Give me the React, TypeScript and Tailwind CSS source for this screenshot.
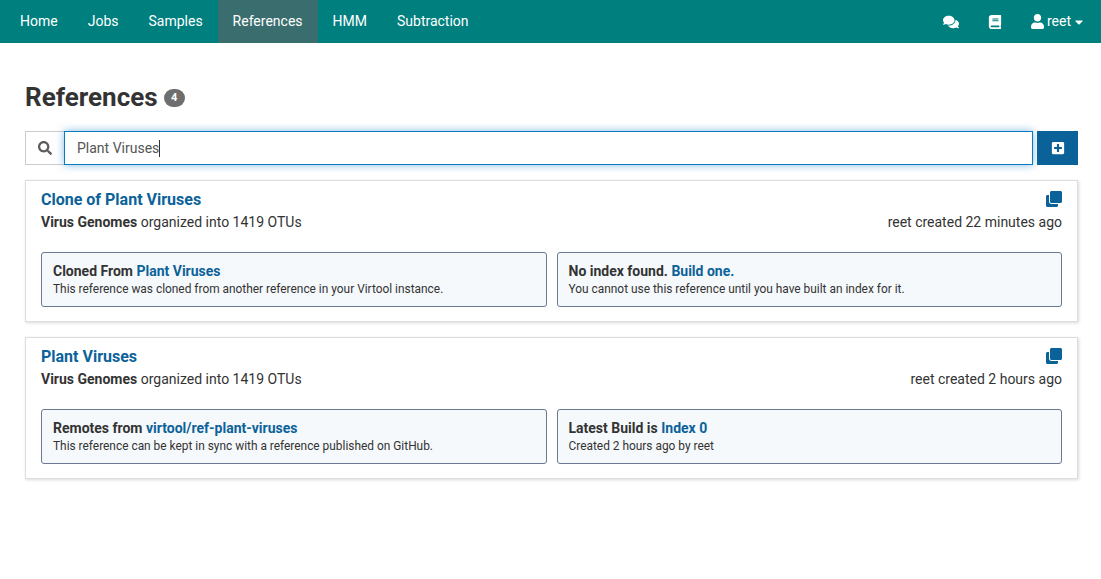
import React from "react";
import { FaBook, FaCaretDown, FaClone, FaComments, FaPlusSquare, FaSearch, FaUser } from "react-icons/fa";

const navItems = ["Home", "Jobs", "Samples", "References", "HMM", "Subtraction"];

function Badge({ title, children }: { title: React.ReactNode; children: React.ReactNode }) {
  return (
    <div className="h-[55px] rounded-[3px] border border-[#6b7891] bg-[#f6f9fc] px-[11px] pt-[8px]">
      <div className="text-[14px] font-bold leading-[20px] text-[#333]">{title}</div>
      <div className="text-[11.9px] leading-[16px] text-[#333]">{children}</div>
    </div>
  );
}

function RefCard({
  name,
  created,
  left,
  right,
}: {
  name: string;
  created: string;
  left: React.ReactNode;
  right: React.ReactNode;
}) {
  return (
    <div className="mb-[15px] h-[142px] border border-[#dddddd] bg-white px-[15px] pt-[9px] shadow-[1px_1px_3px_rgba(0,0,0,0.15)]">
      <div className="flex items-center justify-between">
        <a className="text-[16px] font-bold leading-[20px] text-[#0b6299]">{name}</a>
        <FaClone className="h-4 w-4 -translate-y-px text-[#0b6299]" />
      </div>
      <div className="mt-[2px] flex items-center justify-between text-[14px] leading-[20px] text-[#333]">
        <span>
          <span className="font-bold">Virus Genomes</span> organized into 1419 OTUs
        </span>
        <span>{created}</span>
      </div>
      <div className="mt-[20px] grid grid-cols-2 gap-[10px]">
        {left}
        {right}
      </div>
    </div>
  );
}

export default function App() {
  return (
    <div className="min-h-[579px] bg-white font-['Roboto',sans-serif] text-[#333]">
      <nav className="flex h-[43px] items-stretch justify-between bg-[#007f7f] pl-[5px] pr-[18px] text-[14px] text-white">
        <div className="flex">
          {navItems.map((item) => (
            <a
              key={item}
              className={"flex items-center px-[15px] " + (item === "References" ? "bg-[#3a6e6e]" : "")}
            >
              {item}
            </a>
          ))}
        </div>
        <div className="flex items-center">
          <FaComments className="h-4 w-4" />
          <FaBook className="ml-[29px] h-[14px] w-[14px]" />
          <span className="ml-[29px] flex items-center">
            <FaUser className="mr-[3px] h-[15px] w-[13px]" />
            reet
            <FaCaretDown className="ml-1 h-[14px] w-[8px]" />
          </span>
        </div>
      </nav>

      <main className="pl-[25px] pr-[23px]">
        <h1 className="mt-[38px] flex h-[32px] items-center text-[26px] font-bold leading-[32px] text-[#333]">
          References
          <span className="ml-[6px] mt-[2px] flex h-[18px] w-[21px] items-center justify-center rounded-full bg-[#6e6e6e] text-[11px] font-bold text-white">
            4
          </span>
        </h1>

        <div className="mt-[18px] flex h-[34px]">
          <div className="flex w-[39px] items-center justify-center border border-r-0 border-[#cccccc] text-[#5c5c5c]">
            <FaSearch className="h-[14px] w-[14px]" />
          </div>
          <div className="flex flex-1 items-center border border-[#0b7ac4] bg-white pl-[12px] text-[14px] text-[#555] shadow-[0_0_8px_rgba(11,122,196,0.5)]">
            Plant Viruses
            <span className="h-[17px] w-px bg-[#333]" />
          </div>
          <button className="ml-[4px] flex w-[41px] items-center justify-center bg-[#0b6299] text-white">
            <FaPlusSquare className="h-[14px] w-[14px]" />
          </button>
        </div>

        <div className="mt-[15px]">
          <RefCard
            name="Clone of Plant Viruses"
            created="reet created 22 minutes ago"
            left={
              <Badge
                title={
                  <>
                    Cloned From <a className="text-[#0b6299]">Plant Viruses</a>
                  </>
                }
              >
                This reference was cloned from another reference in your Virtool instance.
              </Badge>
            }
            right={
              <Badge
                title={
                  <>
                    No index found. <a className="text-[#0b6299]">Build one.</a>
                  </>
                }
              >
                You cannot use this reference until you have built an index for it.
              </Badge>
            }
          />
          <RefCard
            name="Plant Viruses"
            created="reet created 2 hours ago"
            left={
              <Badge
                title={
                  <>
                    Remotes from <a className="text-[#0b6299]">virtool/ref-plant-viruses</a>
                  </>
                }
              >
                This reference can be kept in sync with a reference published on GitHub.
              </Badge>
            }
            right={
              <Badge
                title={
                  <>
                    Latest Build is <a className="text-[#0b6299]">Index 0</a>
                  </>
                }
              >
                Created 2 hours ago by reet
              </Badge>
            }
          />
        </div>
      </main>
    </div>
  );
}
